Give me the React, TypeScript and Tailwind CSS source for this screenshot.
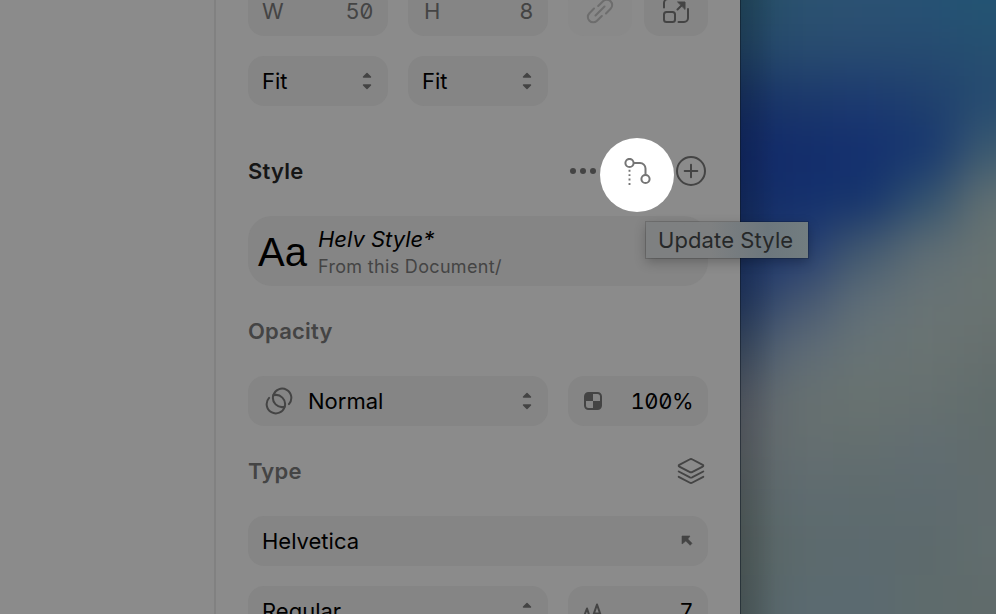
import type { ReactNode } from "react";
import clsx from "clsx";

// colour samples of the wallpaper, one row per 50px
const wallpaper = [
  ["#234b61", "#2b5270", "#2c5273", "#265274", "#235473"],
  ["#214464", "#284b6f", "#284b70", "#264b70", "#264f70"],
  ["#163063", "#1b386b", "#1c3a70", "#1f3f6e", "#264b70"],
  ["#112867", "#132d6b", "#14306f", "#17376f", "#3b5a70"],
  ["#132c63", "#14306d", "#15346d", "#31516e", "#627072"],
  ["#193164", "#233c70", "#42596f", "#5e6d75", "#687372"],
  ["#223965", "#445671", "#5f6e78", "#687375", "#697371"],
  ["#3e4f66", "#5e6b76", "#677375", "#697372", "#666f6e"],
  ["#5a606b", "#667070", "#687270", "#667070", "#616d6c"],
  ["#5d6368", "#646e70", "#636e6f", "#616d71", "#616c6c"],
  ["#576263", "#5e6b70", "#5e6b6e", "#5e6b6f", "#616c6e"],
  ["#556160", "#5c6a6c", "#5c6a6f", "#5d6a6c", "#616d6e"],
  ["#526061", "#5b6a70", "#5b6a70", "#5e6b6c", "#606b6b"],
];

function Wallpaper() {
  return (
    <svg className="h-[614px] w-64 shrink-0" viewBox="0 0 256 614">
      <defs>
        <filter
          id="soft"
          filterUnits="userSpaceOnUse"
          x="-110"
          y="-100"
          width="476"
          height="814"
          colorInterpolationFilters="sRGB"
        >
          <feGaussianBlur stdDeviation="23" />
        </filter>
        <linearGradient id="edge">
          <stop offset="0" stopColor="#000" stopOpacity="0.16" />
          <stop offset="1" stopColor="#000" stopOpacity="0" />
        </linearGradient>
      </defs>
      <g filter="url(#soft)" shapeRendering="crispEdges">
        {wallpaper.map((row, y) =>
          row.map((fill, x) => (
            <rect
              key={`${x}-${y}`}
              x={x === 0 ? -110 : x * 62 - 31}
              y={y === 0 ? -100 : y * 50 - 25}
              width={x === 0 ? 142 : x === 4 ? 160 : 63}
              height={y === 0 ? 126 : y === 12 ? 150 : 51}
              fill={fill}
            />
          )),
        )}
      </g>
      <rect width="36" height="614" fill="url(#edge)" />
      <rect width="1" height="614" fill="#0b1622" fillOpacity="0.5" />
    </svg>
  );
}

function Field({ className, children }: { className?: string; children: ReactNode }) {
  return (
    <div className={clsx("flex h-[50px] shrink-0 items-center justify-between rounded-[16px] bg-[#858585] px-[14px]", className)}>
      {children}
    </div>
  );
}

function Stepper() {
  return (
    <svg className="mr-[2px] h-[18px] w-[10px]" viewBox="0 0 10 18" fill="#444" stroke="#444" strokeWidth="1.4" strokeLinejoin="round">
      <path d="M5 1.4 8.5 5H1.5ZM5 16.6 8.5 13H1.5Z" />
    </svg>
  );
}

const digits = "mr-[1px] tracking-[-0.5px] [font-feature-settings:'tnum','zero']";

export default function App() {
  return (
    <div className="relative flex h-[614px] w-[996px] overflow-hidden bg-[#8b8b8b] font-['Inter',sans-serif] text-[22px] leading-[26px] text-black">
      <div className="w-[214px] shrink-0" />
      <div className="flex w-[526px] shrink-0 flex-col border-l-2 border-[#818181] pl-8 pr-8">
        <div className="-mt-[14px] flex shrink-0">
          <Field className="w-[140px] text-[#444]">
            <span>W</span>
            <span className={digits}>50</span>
          </Field>
          <Field className="ml-5 w-[140px] pl-4 text-[#444]">
            <span>H</span>
            <span className={digits}>8</span>
          </Field>
          <Field className="ml-5 w-16 justify-center bg-[#898989]">
            <svg className="h-7 w-7" viewBox="0 0 28 28" fill="none" stroke="#6d6d6d" strokeWidth="2" strokeLinecap="round">
              <path d="M9.5 18.5 18.5 9.5M12.2 9 17 4.2a5.2 5.2 0 0 1 7.6 7.6L20 16.5M8 11.5 3.4 16.2a5.2 5.2 0 0 0 7.6 7.6L15.8 19" />
            </svg>
          </Field>
          <Field className="ml-3 w-16 justify-center">
            <svg className="h-7 w-7" viewBox="0 0 28 28" fill="none" stroke="#444" strokeWidth="2" strokeLinecap="round">
              <path d="M2 10.5V6a4 4 0 0 1 4-4h9M26 12v9a4 4 0 0 1-4 4h-5.5M15.5 12.5 20.5 7.5" />
              <rect x="2" y="15" width="11" height="10" rx="2.5" />
              <path d="M16 5h7v7Z" fill="#444" strokeWidth="1" strokeLinejoin="round" />
            </svg>
          </Field>
        </div>

        <div className="mt-5 flex shrink-0 gap-5">
          <Field className="w-[140px]">
            Fit
            <Stepper />
          </Field>
          <Field className="w-[140px]">
            Fit
            <Stepper />
          </Field>
        </div>

        <div className="mt-10 flex h-[50px] shrink-0 items-center">
          <h2 className="flex-1 font-semibold tracking-[0.25px] text-[#161616]">Style</h2>
          <svg className="h-[6px] w-7" viewBox="0 0 28 6" fill="#444">
            <circle cx="5" cy="3" r="3" />
            <circle cx="15" cy="3" r="3" />
            <circle cx="25" cy="3" r="3" />
          </svg>
          <div className="relative ml-[2px] h-[50px] w-[74px]">
            <div className="absolute -top-[8px] left-[1.5px] h-[74px] w-[74px] rounded-full bg-white">
              <svg className="ml-6 mt-5 h-7 w-7" viewBox="0 0 28 28" fill="none" stroke="#757575" strokeWidth="2">
                <circle cx="5.5" cy="5" r="4.1" />
                <circle cx="21.5" cy="21" r="4.1" />
                <path d="M9.6 5H16a5.5 5.5 0 0 1 5.5 5.5v6.4" />
                <path d="M5.5 11.8V27" strokeWidth="1.9" strokeDasharray="1.9 2.5" />
              </svg>
            </div>
          </div>
          <svg className="ml-1 mr-[2px] h-[30px] w-[30px]" viewBox="0 0 30 30" fill="none" stroke="#444" strokeWidth="2" strokeLinecap="round">
            <circle cx="15" cy="15" r="14" />
            <path d="M15 8.7v12.6M8.7 15h12.6" />
          </svg>
        </div>

        <div className="mt-5 flex h-[70px] shrink-0 items-center rounded-[24px] bg-[#858585] px-[10px]">
          <span className="mt-[2px] w-[60px] font-['Liberation_Sans',sans-serif] text-[40px] leading-none">Aa</span>
          <div className="mt-1">
            <div className="italic">Helv Style*</div>
            <div className="mt-[2px] text-[18px] tracking-[0.32px] text-[#444]">From this Document/</div>
          </div>
        </div>

        <div className="mt-5 flex h-[50px] shrink-0 items-center font-semibold tracking-[0.2px] text-[#444]">Opacity</div>

        <div className="mt-5 flex shrink-0 gap-5">
          <Field className="w-[300px]">
            <div className="flex items-center">
              <svg className="ml-[3px] mr-[15px] h-7 w-7" viewBox="0 0 28 28" fill="none" stroke="#444" strokeWidth="2" strokeLinecap="round">
                <path d="M19.7 19.7A9.2 9.2 0 0 1 8.3 8.3A9.2 9.2 0 1 1 23.9 17.1" />
                <path d="M8.3 8.3A9.2 9.2 0 0 1 19.7 19.7A9.2 9.2 0 1 1 4.1 10.9" />
              </svg>
              Normal
            </div>
            <Stepper />
          </Field>
          <Field className="w-[140px]">
            <svg className="ml-[2px] h-[18px] w-[18px]" viewBox="0 0 18 18">
              <rect x="1" y="1" width="16" height="16" rx="3.5" fill="#858585" stroke="#444" strokeWidth="2" />
              <path d="M9 1H3L1 3v6h8ZM17 9H9v8h6l2-2Z" fill="#444" />
            </svg>
            <span className={digits}>100%</span>
          </Field>
        </div>

        <div className="mt-5 flex h-[50px] shrink-0 items-center justify-between font-semibold tracking-[0.2px] text-[#444]">
          Type
          <svg className="mr-[3px] h-7 w-7" viewBox="0 0 28 28" fill="none" stroke="#444" strokeWidth="1.9" strokeLinecap="round" strokeLinejoin="round">
            <path d="M12.5 2.5a3 3 0 0 1 3 0l10.2 5.3q1.2.9 0 1.8l-10.2 5.3a3 3 0 0 1-3 0L2.3 9.6q-1.2-.9 0-1.8Z" />
            <path d="m1.7 14.5 10.8 5.7a3 3 0 0 0 3 0l10.8-5.7M1.7 19.8l10.8 5.7a3 3 0 0 0 3 0l10.8-5.7" />
          </svg>
        </div>

        <Field className="mt-5">
          Helvetica
          <svg className="mr-[1px] h-[12px] w-[12px]" viewBox="0 0 12 12" fill="#444">
            <path d="M1 1h8L6.8 4 11 8.3 9.2 10.3 4.8 6 1 9Z" stroke="#444" strokeWidth="0.6" />
          </svg>
        </Field>

        <div className="mt-5 flex shrink-0 gap-5">
          <Field className="w-[300px]">
            Regular
            <Stepper />
          </Field>
          <Field className="w-[140px]">
            <svg className="ml-[1px] h-5 w-5" viewBox="0 0 20 20" fill="none" stroke="#444" strokeWidth="2" strokeLinejoin="round">
              <path d="M0 18 4 7.5 7.4 18M2 14h4.5M9 18 14 3.5l5 14.5M11.5 12.5h5" />
            </svg>
            <span className={digits}>7</span>
          </Field>
        </div>
      </div>
      <Wallpaper />

      <div className="absolute left-[646px] top-[222px] flex h-9 w-[162px] items-center bg-linear-to-r from-[#7e8081] from-40% via-[#6d777d] via-75% to-[#727d80] pl-3 text-[22px] tracking-[0.1px] text-[#262829] shadow-[0_0_0_1px_rgba(0,0,0,0.15),0_4px_12px_rgba(0,0,0,0.25)]">
        Update Style
      </div>
    </div>
  );
}
